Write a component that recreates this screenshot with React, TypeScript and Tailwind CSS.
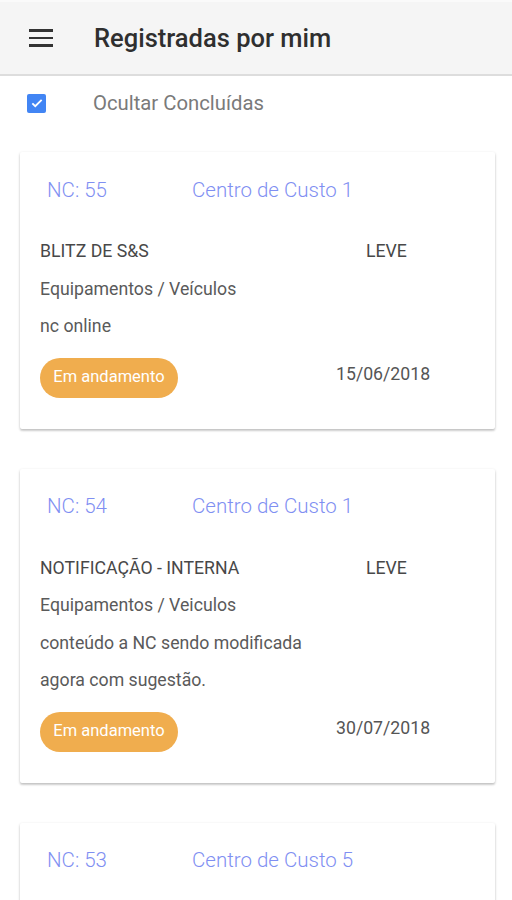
import React from "react";

type Item = {
  nc: string;
  centro: string;
  title: string;
  grav: string;
  lines: string[];
  date: string;
};

const items: Item[] = [
  {
    nc: "NC: 55",
    centro: "Centro de Custo 1",
    title: "BLITZ DE S&S",
    grav: "LEVE",
    lines: ["Equipamentos / Veículos", "nc online"],
    date: "15/06/2018",
  },
  {
    nc: "NC: 54",
    centro: "Centro de Custo 1",
    title: "NOTIFICAÇÃO - INTERNA",
    grav: "LEVE",
    lines: ["Equipamentos / Veiculos", "conteúdo a NC sendo modificada", "agora com sugestão."],
    date: "30/07/2018",
  },
  {
    nc: "NC: 53",
    centro: "Centro de Custo 5",
    title: "",
    grav: "",
    lines: [],
    date: "",
  },
];

function Card({ it, partial }: { it: Item; partial?: boolean }) {
  return (
    <div className="ml-[20px] mr-[17px] bg-white rounded-[2px] shadow-[0_1px_3px_rgba(0,0,0,0.18),0_2px_2px_rgba(0,0,0,0.12)] pt-[19px] pb-[31px]">
      <div className="flex items-center h-[38px] text-[20.5px] text-[#7f8ff2] font-light">
        <span className="ml-[27px] w-[145px]">{it.nc}</span>
        <span>{it.centro}</span>
      </div>
      {!partial && (
        <div className="pl-[20px] mt-[24px]">
          <div className="flex leading-[37.5px] text-[17.7px] text-[#484848]">
            <span className="w-[326px]">{it.title}</span>
            <span>{it.grav}</span>
          </div>
          {it.lines.map((l, i) => (
            <div key={i} className="leading-[37.5px] text-[17.7px] text-[#5a5a5a]">
              {l}
            </div>
          ))}
          <div className="flex items-center mt-[12px]">
            <span className="h-[40px] w-[138px] rounded-full bg-[#f0ad4e] text-white text-[16.5px] flex items-center justify-center">
              Em andamento
            </span>
            <span className="ml-[158px] -mt-[6px] text-[17.7px] text-[#555]">{it.date}</span>
          </div>
        </div>
      )}
      {partial && <div className="h-[60px]" />}
    </div>
  );
}

export default function App() {
  return (
    <div className="w-[512px] h-[900px] overflow-hidden bg-white font-['Roboto',sans-serif]">
      <div className="h-[76px] bg-[#f5f5f5] border-t-2 border-t-[#fafafa] border-b-2 border-b-[#dddddd] flex items-center">
        <div className="ml-[29px] w-[24px] flex flex-col gap-[5px]">
          <div className="h-[2.5px] bg-[#333]" />
          <div className="h-[2.5px] bg-[#333]" />
          <div className="h-[2.5px] bg-[#333]" />
        </div>
        <span className="ml-[41px] text-[25.5px] font-medium text-[#2f2f2f]">Registradas por mim</span>
      </div>
      <div className="flex items-center h-[54px]">
        <div className="ml-[27px] w-[19px] h-[19px] rounded-[2px] bg-[#4285f4] flex items-center justify-center">
          <svg width="14" height="14" viewBox="0 0 24 24">
            <path d="M4 12.5l5 5L20 6.5" fill="none" stroke="white" strokeWidth="3.2" />
          </svg>
        </div>
        <span className="ml-[47px] text-[20.3px] text-[#7a7a7a]">Ocultar Concluídas</span>
      </div>
      <div className="mt-[22px] flex flex-col gap-[40px]">
        <Card it={items[0]} />
        <Card it={items[1]} />
        <Card it={items[2]} partial />
      </div>
    </div>
  );
}
